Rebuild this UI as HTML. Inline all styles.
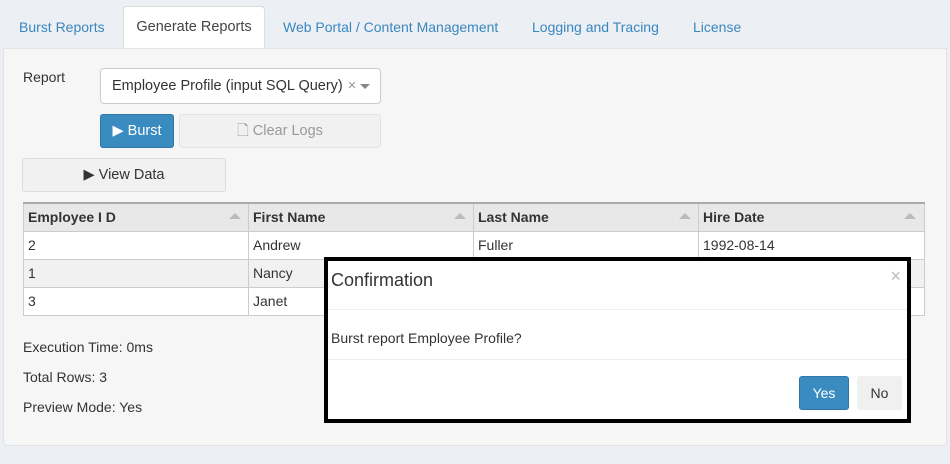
<!DOCTYPE html><html><head><style>
*{box-sizing:border-box;margin:0;padding:0}
body{width:950px;height:464px;background:#eceff3;font-family:"Liberation Sans",sans-serif;font-size:14px;color:#333;position:relative;overflow:hidden}
.a{position:absolute}
.tab{position:absolute;top:8px;height:40px;line-height:38px;color:#3a87bf;font-size:14px}
td,th{border:1px solid #ccc;height:28px;padding:0 4px;text-align:left;vertical-align:middle}
</style></head><body>
<div class="tab" style="left:19px">Burst Reports</div>
<div class="a" style="left:123px;top:6px;width:142px;height:43px;background:#fff;border:1px solid #ddd;border-bottom:none;border-radius:4px 4px 0 0;line-height:40px;text-align:center;color:#444;font-size:14.5px">Generate Reports</div>
<div class="tab" style="left:283px">Web Portal / Content Management</div>
<div class="tab" style="left:532px">Logging and Tracing</div>
<div class="tab" style="left:693px">License</div>
<div class="a" style="left:3px;top:48px;width:944px;height:398px;background:#f6f6f6;border:1px solid #e3e3e3;border-radius:0 0 4px 4px"></div>
<div class="a" style="left:23px;top:69px">Report</div>
<div class="a" style="left:100px;top:68px;width:281px;height:36px;background:#fff;border:1px solid #ccc;border-radius:4px;padding:0 11px;line-height:34px;font-size:14.5px">Employee Profile (input SQL Query)<span style="color:#999;margin-left:5px">×</span><span class="a" style="right:10px;top:15px;border:5px solid transparent;border-top-color:#888"></span></div>
<div class="a" style="left:100px;top:114px;width:74px;height:34px;background:#3a8bc0;border:1px solid #2e76a8;border-radius:3px;color:#fff;text-align:center;line-height:32px;font-size:14.5px">▶ Burst</div>
<div class="a" style="left:179px;top:114px;width:202px;height:34px;background:#f1f1f1;border:1px solid #e3e3e3;border-radius:3px;color:#999;text-align:center;line-height:32px;font-size:14.5px">🗋 Clear Logs</div>
<div class="a" style="left:22px;top:158px;width:204px;height:34px;background:#f1f1f1;border:1px solid #ddd;border-radius:3px;text-align:center;line-height:32px;font-size:14.5px">▶ View Data</div>
<table class="a" style="left:23px;top:202px;width:902px;border-collapse:collapse;background:#fff;font-size:14px">
<tr style="background:#e8e8e8;font-weight:bold"><th style="width:225px;border-top:2px solid #aaa">Employee I D</th><th style="width:225px;border-top:2px solid #aaa">First Name</th><th style="width:225px;border-top:2px solid #aaa">Last Name</th><th style="border-top:2px solid #aaa">Hire Date</th></tr>
<tr><td>2</td><td>Andrew</td><td>Fuller</td><td>1992-08-14</td></tr>
<tr style="background:#f1f1f1"><td>1</td><td>Nancy</td><td></td><td></td></tr>
<tr><td>3</td><td>Janet</td><td></td><td></td></tr>
</table>
<div class="a" style="left:229px;top:213px;border:6px solid transparent;border-bottom-color:#bbb;border-top:0"></div>
<div class="a" style="left:454px;top:213px;border:6px solid transparent;border-bottom-color:#bbb;border-top:0"></div>
<div class="a" style="left:679px;top:213px;border:6px solid transparent;border-bottom-color:#bbb;border-top:0"></div>
<div class="a" style="left:904px;top:213px;border:6px solid transparent;border-bottom-color:#bbb;border-top:0"></div>
<div class="a" style="left:23px;top:339px">Execution Time: 0ms</div>
<div class="a" style="left:23px;top:369px">Total Rows: 3</div>
<div class="a" style="left:23px;top:399px">Preview Mode: Yes</div>
<div class="a" style="left:324px;top:257px;width:587px;height:166px;background:#fff;border:4px solid #000">
<div class="a" style="left:3px;top:9px;font-size:18px">Confirmation</div>
<div class="a" style="right:6px;top:5px;color:#bbb;font-size:18px">×</div>
<div class="a" style="left:0;right:0;top:48px;border-top:1px solid #eee"></div>
<div class="a" style="left:3px;top:69px">Burst report Employee Profile?</div>
<div class="a" style="left:0;right:0;top:98px;border-top:1px solid #eee"></div>
<div class="a" style="left:471px;top:115px;width:50px;height:34px;background:#3a8bc0;border:1px solid #2e76a8;border-radius:3px;color:#fff;text-align:center;line-height:32px">Yes</div>
<div class="a" style="left:529px;top:115px;width:45px;height:34px;background:#f0f0f0;border-radius:3px;text-align:center;line-height:34px">No</div>
</div>
</body></html>
